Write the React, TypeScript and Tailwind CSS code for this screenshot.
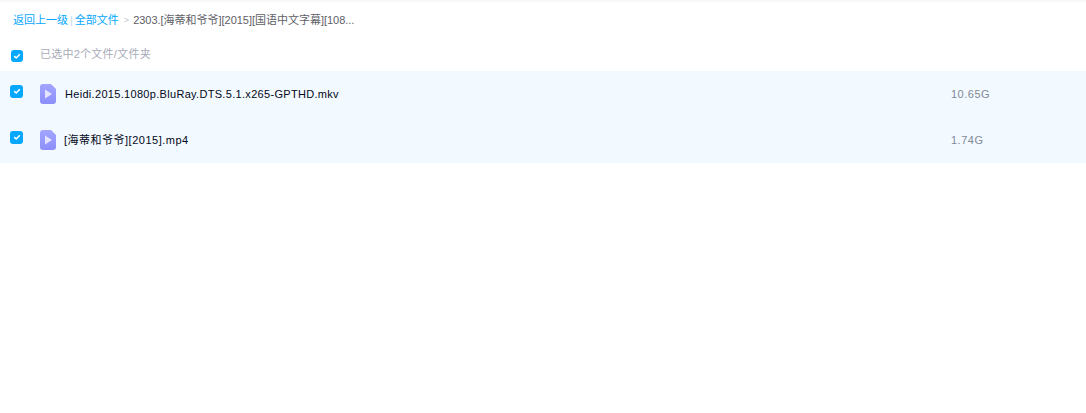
const Check = ({ className }: { className: string }) => (
  <span className={`flex h-3 w-3 shrink-0 items-center justify-center rounded-[3px] bg-[#06a7ff] ${className}`}>
    <svg width="8" height="8" viewBox="0 0 8 8" fill="none">
      <path d="M1.2 4.2 3.2 6 6.8 2.2" stroke="#fff" strokeWidth="1.6" />
    </svg>
  </span>
);

const VideoIcon = () => (
  <svg width="16" height="20" viewBox="0 0 16 20" className="block">
    <defs>
      <linearGradient id="vid" x1="0" y1="0" x2="0" y2="1">
        <stop offset="0" stopColor="#a3a5ff" />
        <stop offset="1" stopColor="#8c8ffb" />
      </linearGradient>
    </defs>
    <path d="M3 0H11L16 5V17a3 3 0 0 1-3 3H3a3 3 0 0 1-3-3V3a3 3 0 0 1 3-3Z" fill="url(#vid)" />
    <path d="M5 5.5 12 10 5 14.5Z" fill="#e4e4ff" />
  </svg>
);

const files = [
  { name: "Heidi.2015.1080p.BluRay.DTS.5.1.x265-GPTHD.mkv", size: "10.65G", nameClass: "ml-[9px] tracking-[0.31px]" },
  { name: "[海蒂和爷爷][2015].mp4", size: "1.74G", nameClass: "ml-2 tracking-[0.5px]" },
];

export default function App() {
  return (
    <div className="min-h-[413px] bg-white font-['Liberation_Sans','Noto_Sans_CJK_SC',sans-serif]">
      <div className="h-[2px] bg-[#f7f7f8]" />

      {/* breadcrumb */}
      <div className="flex h-9 items-center pl-[13px] text-[11px] leading-none">
        <span className="text-[#06a7ff]">返回上一级</span>
        <span className="mx-[2px] text-[#c4d8f4]">|</span>
        <span className="text-[#06a7ff]">全部文件</span>
        <span className="ml-[5px] mr-1 text-[9px] text-[#c4c7d0]">&gt;</span>
        <span className="tracking-[-0.02px] text-[#5e6066]">2303.[海蒂和爷爷][2015][国语中文字幕][108...</span>
      </div>

      {/* selection header */}
      <div className="flex h-[33px] items-center pl-[11px]">
        <Check className="mt-[3px]" />
        <span className="ml-[17px] text-[11px] tracking-[0.25px] text-[#a7abb8]">已选中2个文件/文件夹</span>
      </div>

      {/* file list */}
      <div className="bg-[#f2f9ff]">
        {files.map((file) => (
          <div key={file.size} className="flex h-[46px] items-center pl-[10px]">
            <Check className="mb-[6px] h-[13px] w-[13px]" />
            <span className="ml-[17px]">
              <VideoIcon />
            </span>
            <span className={`${file.nameClass} flex-1 text-[11px] text-[#03081a]`}>{file.name}</span>
            <span className="w-[135px] text-[11px] tracking-[0.5px] text-[#818999]">{file.size}</span>
          </div>
        ))}
      </div>
    </div>
  );
}
